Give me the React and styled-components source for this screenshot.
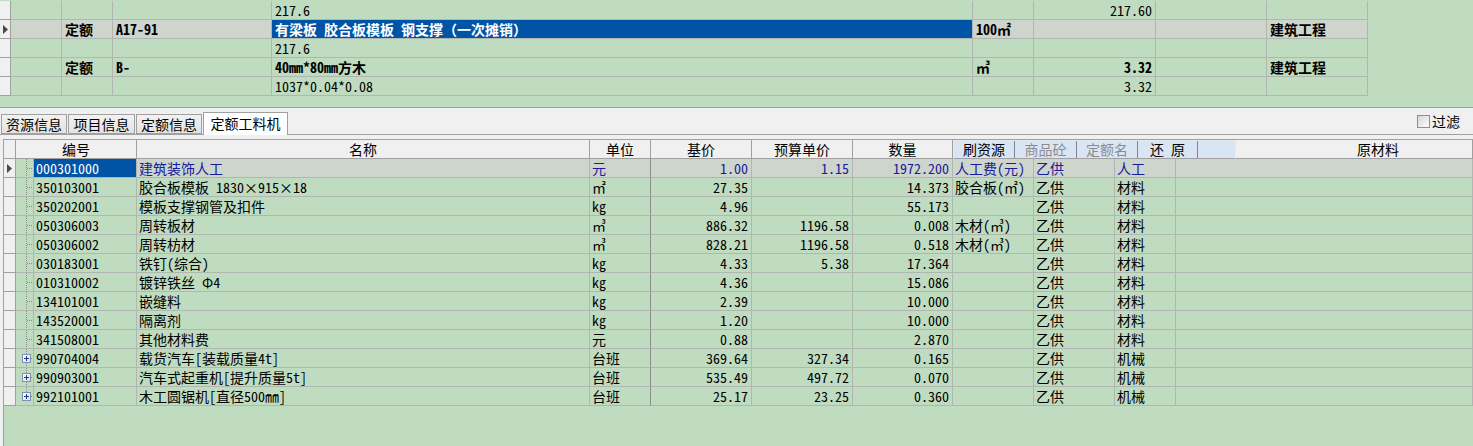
import React from 'react';
import styled, { createGlobalStyle } from 'styled-components';

const GREEN = '#c0dcc0';
const SEL = '#cdd5cd';
const LINE = '#b0b6b0';
const DARK = '#a0a0a0';
const BLUE = '#0054a6';
const TEXTBLUE = '#1a1a9c';
const FACE = '#f0f0f0';

const Global = createGlobalStyle`
  html, body { margin: 0; padding: 0; }
  body {
    background: ${FACE};
    font-family: "Noto Sans CJK SC", sans-serif;
    font-size: 14px;
    color: #000;
    font-feature-settings: "hwid" 1;
  }
  #root { width: 1473px; height: 446px; overflow: hidden; }
`;

const Page = styled.div`
  width: 1473px;
  height: 446px;
  display: flex;
  flex-direction: column;
  overflow: hidden;
`;

/* ---------- top grid ---------- */
const TCOLS = '11px 51px 51px 159px 701px 61px 122px 111px 101px';

const TopPane = styled.div`
  height: 108px;
  box-sizing: border-box;
  padding-top: 1px;
  background: ${GREEN};
  border-bottom: 1px solid ${DARK};
  flex: none;
`;

const TRow = styled.div`
  display: grid;
  grid-template-columns: ${TCOLS};
  width: 1368px;
  height: 19px;
`;

const RowHead = styled.div`
  box-sizing: border-box;
  background: ${FACE};
  border-right: 1px solid ${DARK};
  border-bottom: 1px solid ${DARK};
  display: flex;
  align-items: center;
  justify-content: center;
`;

const TCell = styled.div`
  box-sizing: border-box;
  border-right: 1px solid ${LINE};
  border-bottom: 1px solid ${LINE};
  line-height: 18px;
  padding: 0 3px;
  white-space: nowrap;
  overflow: hidden;
  background: ${(p) => (p.$hl ? BLUE : p.$sel ? SEL : GREEN)};
  color: ${(p) => (p.$hl ? '#fff' : '#000')};
  font-weight: ${(p) => (p.$bold ? 700 : 400)};
  text-align: ${(p) => (p.$right ? 'right' : 'left')};
`;

const Wide = styled.span`
  font-feature-settings: normal;
`;

/* ---------- tabs ---------- */
const TabStrip = styled.div`
  flex: none;
  height: 27px;
  box-sizing: border-box;
  display: flex;
  align-items: flex-end;
  padding-left: 1px;
  background: ${FACE};
  border-bottom: 1px solid ${DARK};
`;

const Tab = styled.div`
  box-sizing: border-box;
  width: ${(p) => p.$w}px;
  height: ${(p) => (p.$active ? 23 : 20)}px;
  margin-right: 1px;
  margin-bottom: ${(p) => (p.$active ? -1 : 0)}px;
  border: 1px solid ${DARK};
  border-bottom: ${(p) => (p.$active ? 'none' : `1px solid ${DARK}`)};
  background: ${(p) => (p.$active ? '#fff' : 'linear-gradient(#f2f2f2, #e2e2e2)')};
  line-height: ${(p) => (p.$active ? 21 : 18)}px;
  text-align: center;
  font-size: 14px;
  white-space: nowrap;
  position: relative;
  z-index: ${(p) => (p.$active ? 1 : 0)};
`;

const Filter = styled.label`
  margin-left: auto;
  margin-right: 13px;
  align-self: center;
  display: flex;
  align-items: center;
  gap: 2px;
  line-height: 16px;
`;

const Check = styled.span`
  width: 13px;
  height: 13px;
  box-sizing: border-box;
  border: 1px solid #8f8f8f;
  background: linear-gradient(135deg, #d6d6d6, #fdfdfd);
`;

const Gap = styled.div`
  flex: none;
  height: 4px;
  background: ${FACE};
`;

/* ---------- lower table ---------- */
const LCOLS = '12px 18px 103px 453px 61px 101px 101px 100px 81px 81px 61px 1fr';
const HCOLS = '12px 121px 453px 61px 101px 101px 100px 283px 1fr';

const Lower = styled.div`
  flex: 1;
  display: flex;
  padding-left: 3px;
  background: ${FACE};
  min-height: 0;
`;

const Sheet = styled.div`
  flex: 1;
  border-left: 1px solid ${DARK};
  border-top: 1px solid ${DARK};
  background: ${GREEN};
  overflow: hidden;
`;

const HeadRow = styled.div`
  display: grid;
  grid-template-columns: ${HCOLS};
  height: 19px;
`;

const HeadCell = styled.div`
  box-sizing: border-box;
  background: ${FACE};
  border-right: 1px solid ${DARK};
  border-bottom: 1px solid ${DARK};
  line-height: 18px;
  text-align: ${(p) => (p.$pl ? 'left' : 'center')};
  padding-left: ${(p) => p.$pl || 0}px;
  white-space: nowrap;
`;

const Toolbar = styled.div`
  box-sizing: border-box;
  display: flex;
  background: #d9e5f4;
  border: 1px solid #e6e9ee;
  border-bottom-color: ${DARK};
`;

const ToolBtn = styled.div`
  box-sizing: border-box;
  width: ${(p) => (p.$w ? `${p.$w}px` : 'auto')};
  flex: ${(p) => (p.$w ? 'none' : 1)};
  border-right: ${(p) => (p.$w ? '1px solid #7d8590' : 'none')};
  line-height: 17px;
  text-align: center;
  color: ${(p) => (p.$off ? '#8c8c8c' : '#000')};
  white-space: pre;
`;

const DataRow = styled.div`
  display: grid;
  grid-template-columns: ${LCOLS};
  height: 19px;
`;

const DCell = styled.div`
  box-sizing: border-box;
  border-right: 1px solid ${(p) => (p.$divider ? '#8c8c8c' : LINE)};
  border-bottom: 1px solid ${LINE};
  line-height: 18px;
  padding: ${(p) => (p.$right ? '0 3px 0 0' : '0 0 0 2px')};
  text-align: ${(p) => (p.$right ? 'right' : 'left')};
  white-space: nowrap;
  overflow: hidden;
  background: ${(p) => (p.$hl ? BLUE : p.$sel ? SEL : GREEN)};
  color: ${(p) => (p.$hl ? '#fff' : p.$sel ? TEXTBLUE : '#000')};
`;

const TreeCell = styled.div`
  box-sizing: border-box;
  border-right: 1px solid ${LINE};
  border-bottom: 1px solid ${LINE};
  background: ${GREEN};
  display: flex;
  align-items: flex-start;
`;

const Tri = () => (
  <svg width="5" height="9" viewBox="0 0 5 9">
    <path d="M0 0 L5 4.5 L0 9 Z" fill="#4a4a4a" />
  </svg>
);

const Tree = ({ plus, last }) => (
  <svg width="17" height="18" viewBox="0 0 17 18">
    <line x1="10.5" y1="0" x2="10.5" y2={last ? 9 : 18} stroke="#8a8a8a" strokeDasharray="1 1" />
    {plus ? (
      <>
        <line x1="15" y1="9.5" x2="17" y2="9.5" stroke="#8a8a8a" strokeDasharray="1 1" />
        <defs>
          <linearGradient id="pb" x1="0" y1="0" x2="1" y2="1">
            <stop offset="0" stopColor="#ffffff" />
            <stop offset="1" stopColor="#d8dce4" />
          </linearGradient>
        </defs>
        <rect x="6.5" y="5.5" width="8" height="8" fill="url(#pb)" stroke="#7f92b0" />
        <path d="M8 9.5h5M10.5 7v5" stroke="#1c3a8c" />
      </>
    ) : (
      <line x1="11" y1="9.5" x2="17" y2="9.5" stroke="#8a8a8a" strokeDasharray="1 1" />
    )}
  </svg>
);

const topRows = [
  { name: '217.6', amt: '217.60' },
  {
    sel: true,
    kind: '定额',
    code: 'A17-91',
    name: (
      <>
        有梁板 胶合板模板 钢支撑<Wide>（一次摊销）</Wide>
      </>
    ),
    unit: '100㎡',
    prof: '建筑工程',
    bold: true,
  },
  { name: '217.6' },
  { kind: '定额', code: 'B-', name: '40mm*80mm方木', unit: '㎥', amt: '3.32', prof: '建筑工程', bold: true },
  { name: '1037*0.04*0.08', amt: '3.32' },
];

const rows = [
  ['000301000', '建筑装饰人工', '元', '1.00', '1.15', '1972.200', '人工费(元)', '乙供', '人工'],
  ['350103001', '胶合板模板 1830×915×18', '㎡', '27.35', '', '14.373', '胶合板(㎡)', '乙供', '材料'],
  ['350202001', '模板支撑钢管及扣件', 'kg', '4.96', '', '55.173', '', '乙供', '材料'],
  ['050306003', '周转板材', '㎥', '886.32', '1196.58', '0.008', '木材(㎥)', '乙供', '材料'],
  ['050306002', '周转枋材', '㎥', '828.21', '1196.58', '0.518', '木材(㎥)', '乙供', '材料'],
  ['030183001', '铁钉(综合)', 'kg', '4.33', '5.38', '17.364', '', '乙供', '材料'],
  ['010310002', '镀锌铁丝 Φ4', 'kg', '4.36', '', '15.086', '', '乙供', '材料'],
  ['134101001', '嵌缝料', 'kg', '2.39', '', '10.000', '', '乙供', '材料'],
  ['143520001', '隔离剂', 'kg', '1.20', '', '10.000', '', '乙供', '材料'],
  ['341508001', '其他材料费', '元', '0.88', '', '2.870', '', '乙供', '材料'],
  ['990704004', '载货汽车[装载质量4t]', '台班', '369.64', '327.34', '0.165', '', '乙供', '机械'],
  ['990903001', '汽车式起重机[提升质量5t]', '台班', '535.49', '497.72', '0.070', '', '乙供', '机械'],
  ['992101001', '木工圆锯机[直径500㎜]', '台班', '25.17', '23.25', '0.360', '', '乙供', '机械'],
];

export default function App() {
  return (
    <Page>
      <Global />
      <TopPane>
        {topRows.map((r, i) => (
          <TRow key={i}>
            <RowHead>{r.sel && <Tri />}</RowHead>
            <TCell $sel={r.sel} />
            <TCell $sel={r.sel} $bold>{r.kind}</TCell>
            <TCell $sel={r.sel} $bold>{r.code}</TCell>
            <TCell $hl={r.sel} $bold={r.bold}>{r.name}</TCell>
            <TCell $sel={r.sel} $bold>{r.unit}</TCell>
            <TCell $sel={r.sel} $right $bold={r.bold}>{r.amt}</TCell>
            <TCell $sel={r.sel} />
            <TCell $sel={r.sel} $bold>{r.prof}</TCell>
          </TRow>
        ))}
      </TopPane>

      <TabStrip>
        <Tab $w={66}>资源信息</Tab>
        <Tab $w={67}>项目信息</Tab>
        <Tab $w={66}>定额信息</Tab>
        <Tab $w={85} $active>定额工料机</Tab>
        <Filter>
          <Check />
          过滤
        </Filter>
      </TabStrip>
      <Gap />

      <Lower>
        <Sheet>
          <HeadRow>
            <HeadCell />
            <HeadCell>编号</HeadCell>
            <HeadCell>名称</HeadCell>
            <HeadCell>单位</HeadCell>
            <HeadCell>基价</HeadCell>
            <HeadCell>预算单价</HeadCell>
            <HeadCell>数量</HeadCell>
            <Toolbar>
              <ToolBtn $w={61}>刷资源</ToolBtn>
              <ToolBtn $w={62} $off>商品砼</ToolBtn>
              <ToolBtn $w={61} $off>定额名</ToolBtn>
              <ToolBtn $w={60}>还 原</ToolBtn>
              <ToolBtn />
            </Toolbar>
            <HeadCell $pl={121}>原材料</HeadCell>
          </HeadRow>
          {rows.map((r, i) => {
            const sel = i === 0;
            const plus = i >= 10;
            return (
              <DataRow key={r[0]}>
                <RowHead>{sel && <Tri />}</RowHead>
                <TreeCell>
                  <Tree plus={plus} last={i === rows.length - 1} />
                </TreeCell>
                <DCell $hl={sel}>{r[0]}</DCell>
                <DCell $sel={sel}>{r[1]}</DCell>
                <DCell $sel={sel} $divider>{r[2]}</DCell>
                <DCell $sel={sel} $right>{r[3]}</DCell>
                <DCell $sel={sel} $right>{r[4]}</DCell>
                <DCell $sel={sel} $right>{r[5]}</DCell>
                <DCell $sel={sel}>{r[6]}</DCell>
                <DCell $sel={sel}>{r[7]}</DCell>
                <DCell $sel={sel}>{r[8]}</DCell>
                <DCell $sel={sel} />
              </DataRow>
            );
          })}
        </Sheet>
      </Lower>
    </Page>
  );
}
